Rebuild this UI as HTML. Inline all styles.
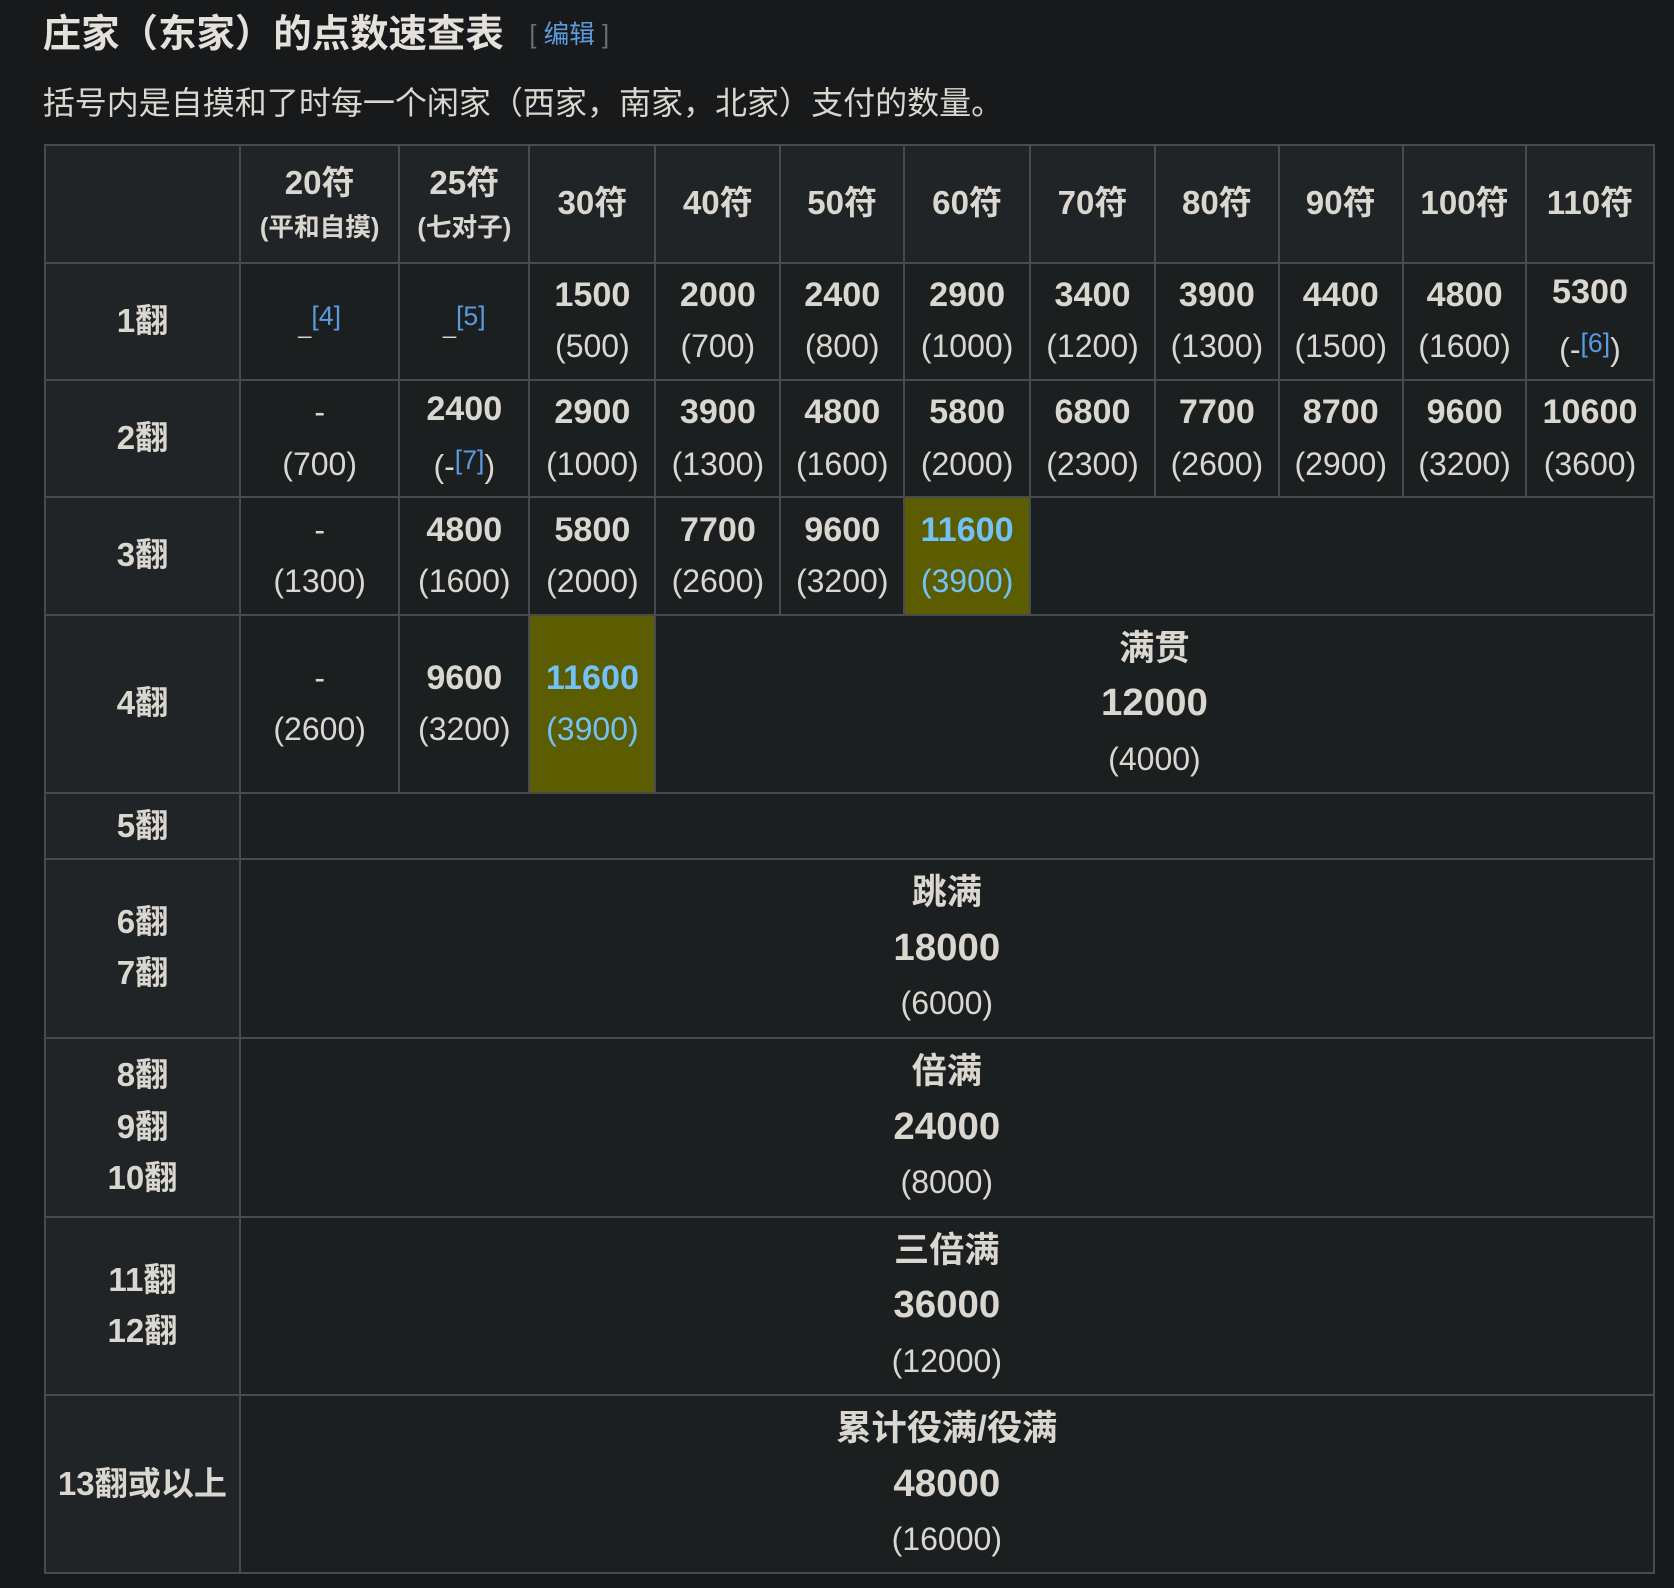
<!DOCTYPE html>
<html><head><meta charset="utf-8">
<style>
html,body{margin:0;padding:0;background:#18191b;}
body{width:1674px;height:1588px;overflow:hidden;}
#w{zoom:1.06760;width:1568px;height:1487px;position:relative;font-family:"Liberation Sans","Noto Sans CJK SC",sans-serif;color:#dad6d0;}
h2{position:absolute;left:40px;top:9px;margin:0;font-size:36px;font-weight:bold;line-height:46px;color:#e4e1dc;}
h2 span{font-size:24px;font-weight:normal;color:#6a6f75;margin-left:24px;vertical-align:3px;}
h2 span b{color:#5a9be0;font-weight:normal;}
p{position:absolute;left:40px;top:77px;margin:0;font-size:30px;line-height:40px;color:#dad6d0;}
table{position:absolute;left:41px;top:135px;border-collapse:collapse;table-layout:fixed;}
td,th{border:2px solid #474a4e;text-align:center;background:#1c1f20;padding:0;font-size:30px;line-height:48px;font-weight:normal;}
th{background:#212426;font-weight:bold;font-size:31px;}
.b{font-weight:bold;font-size:32px;}
.s{font-weight:bold;font-size:33px;}
.s i{font-style:normal;font-size:36px;}
.hd{line-height:46px;}
.hd small{font-size:24px;display:block;line-height:38px;}
.h{background:#5c5c00;color:#73c2f7;}
a{color:#5a9be0;font-size:25px;vertical-align:8px;}
.d{font-size:22px;}
</style></head><body><div id="w">
<h2>庄家（东家）的点数速查表<span>[ <b>编辑</b> ]</span></h2>
<p>括号内是自摸和了时每一个闲家（西家，南家，北家）支付的数量。</p>
<table>
<colgroup><col style="width:183px"><col style="width:149px"><col style="width:122px"><col style="width:118px"><col style="width:117px"><col style="width:116px"><col style="width:118px"><col style="width:117px"><col style="width:116px"><col style="width:116px"><col style="width:116px"><col style="width:119px"></colgroup>
<tr style="height:110px"><th></th><th class="hd">20符<small>(平和自摸)</small></th><th class="hd">25符<small>(七对子)</small></th><th>30符</th><th>40符</th><th>50符</th><th>60符</th><th>70符</th><th>80符</th><th>90符</th><th>100符</th><th>110符</th></tr>
<tr style="height:110px"><th>1翻</th><td><span class="d">_</span><a>[4]</a></td><td><span class="d">_</span><a>[5]</a></td><td><span class="b">1500</span><br>(500)</td><td><span class="b">2000</span><br>(700)</td><td><span class="b">2400</span><br>(800)</td><td><span class="b">2900</span><br>(1000)</td><td><span class="b">3400</span><br>(1200)</td><td><span class="b">3900</span><br>(1300)</td><td><span class="b">4400</span><br>(1500)</td><td><span class="b">4800</span><br>(1600)</td><td><span class="b">5300</span><br>(-<a>[6]</a>)</td></tr>
<tr style="height:110px"><th>2翻</th><td>-<br>(700)</td><td><span class="b">2400</span><br>(-<a>[7]</a>)</td><td><span class="b">2900</span><br>(1000)</td><td><span class="b">3900</span><br>(1300)</td><td><span class="b">4800</span><br>(1600)</td><td><span class="b">5800</span><br>(2000)</td><td><span class="b">6800</span><br>(2300)</td><td><span class="b">7700</span><br>(2600)</td><td><span class="b">8700</span><br>(2900)</td><td><span class="b">9600</span><br>(3200)</td><td><span class="b">10600</span><br>(3600)</td></tr>
<tr style="height:110px"><th>3翻</th><td>-<br>(1300)</td><td><span class="b">4800</span><br>(1600)</td><td><span class="b">5800</span><br>(2000)</td><td><span class="b">7700</span><br>(2600)</td><td><span class="b">9600</span><br>(3200)</td><td class="h"><span class="b">11600</span><br>(3900)</td><td colspan="5"></td></tr>
<tr style="height:167px"><th>4翻</th><td>-<br>(2600)</td><td><span class="b">9600</span><br>(3200)</td><td class="h"><span class="b">11600</span><br>(3900)</td><td colspan="8" style="line-height:51px"><span class="s">满贯<br><i>12000</i></span><br>(4000)</td></tr>
<tr style="height:62px"><th>5翻</th><td colspan="11"></td></tr>
<tr style="height:167px"><th>6翻<br>7翻</th><td colspan="11" style="line-height:51px"><span class="s">跳满<br><i>18000</i></span><br>(6000)</td></tr>
<tr style="height:168px"><th>8翻<br>9翻<br>10翻</th><td colspan="11" style="line-height:51px"><span class="s">倍满<br><i>24000</i></span><br>(8000)</td></tr>
<tr style="height:167px"><th>11翻<br>12翻</th><td colspan="11" style="line-height:51px"><span class="s">三倍满<br><i>36000</i></span><br>(12000)</td></tr>
<tr style="height:167px"><th>13翻或以上</th><td colspan="11" style="line-height:51px"><span class="s">累计役满/役满<br><i>48000</i></span><br>(16000)</td></tr>
</table>
</div></body></html>
